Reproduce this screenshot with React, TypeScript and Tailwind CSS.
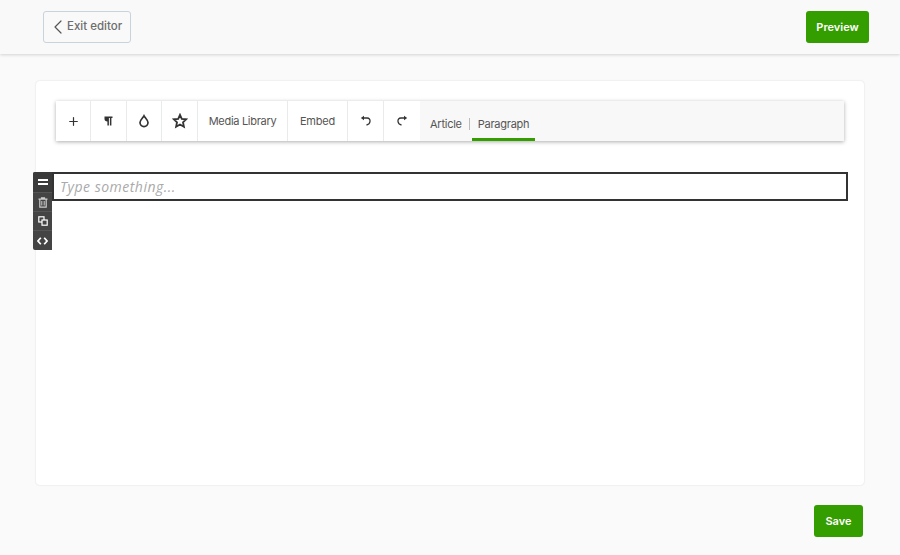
import React from 'react';
import { ChevronLeft, Plus } from 'lucide-react';

const ToolCell: React.FC<{ className: string; children: React.ReactNode }> = ({ className, children }) => (
  <div className={`flex h-full items-center justify-center border-r border-[#e9ebeb] bg-white text-[#555] ${className}`}>
    {children}
  </div>
);

const Pilcrow = () => (
  <svg width="9" height="10" viewBox="0 0 9 10" fill="#333">
    <path d="M0.500 0.500H8.500V2H7.400V9.500H5.900V2H4.900V9.500H3.400V5.500C1.500 5.500 0.500 4.400 0.500 3Z" />
  </svg>
);

const Drop = () => (
  <svg width="14" height="14" viewBox="0 0 14 14" fill="none" stroke="#333" strokeWidth="1.700">
    <path d="M7 1.800C6 3.800 3 5.800 3 8.600a4 4 0 0 0 8 0C11 5.800 8 3.800 7 1.800Z" />
  </svg>
);

const StarIcon = () => (
  <svg width="16" height="16" viewBox="0 0 16 16" fill="none" stroke="#333" strokeWidth="1.800" strokeLinejoin="miter">
    <path d="M8 1.800L9.800 5.800L14.200 6.300L11 9.300L11.900 13.700L8 11.500L4.100 13.700L5 9.300L1.800 6.300L6.200 5.800Z" />
  </svg>
);

const UndoIcon: React.FC<{ flip?: boolean }> = ({ flip }) => (
  <svg width="12" height="12" viewBox="0 0 12 12" fill="none" className={flip ? '-scale-x-100' : ''}>
    <path d="M3 3H7C9.500 3 10.200 5 10 6.500C9.800 8 8.800 9.500 6.500 10" stroke="#333" strokeWidth="1.300" />
    <path d="M4 0.800V5.200L0.800 3Z" fill="#333" />
  </svg>
);

const TrashIcon = () => (
  <svg width="10" height="11" viewBox="0 0 10 11" fill="none" stroke="#ccc" strokeWidth="1.200">
    <path d="M0.500 2.200H9.500M3.500 2V0.800H6.500V2M1.800 2.200V10.200H8.200V2.200" />
    <path d="M3.800 4V8.500M6.200 4V8.500" strokeWidth="1" />
  </svg>
);

const CopyIcon = () => (
  <svg width="10" height="10" viewBox="0 0 10 10" fill="none" stroke="#fff" strokeWidth="1.200">
    <rect x="0.800" y="0.800" width="5.200" height="5.200" />
    <rect x="4" y="4" width="5.200" height="5.200" fill="#444" />
  </svg>
);

const CodeIcon = () => (
  <svg width="11" height="8" viewBox="0 0 11 8" fill="none" stroke="#fff" strokeWidth="1.700">
    <path d="M3.800 0.800L1 4L3.800 7.200M7.200 0.800L10 4L7.200 7.200" />
  </svg>
);

const App: React.FC = () => {
  return (
    <div className="flex h-[555px] w-[900px] flex-col overflow-hidden bg-[#fafafa] font-['Inter',sans-serif]">
      <header className="flex h-[54px] shrink-0 items-center justify-between bg-[#f9f9f9] pl-[43px] pr-[31px] shadow-[0_1px_3px_rgba(0,0,0,0.16)]">
        <button className="flex h-8 w-[88px] items-center rounded-[3px] border border-[#c9d3dc] pl-[2px] text-[11.500px] font-medium text-[#6d6d6d]">
          <ChevronLeft size={24} strokeWidth={1.200} className="-mr-[3px] shrink-0 text-[#555]" />
          Exit editor
        </button>
        <button className="h-8 w-[63px] rounded-[3px] bg-[#349d00] text-[11px] font-semibold text-white">Preview</button>
      </header>

      <main className="mx-[36px] mt-[27px] h-[404px] shrink-0 rounded-[4px] bg-white px-[20px] pt-[20px] shadow-[0_0_2px_rgba(0,0,0,0.14)]">
        <div className="flex h-[40px] items-stretch bg-[#f8f8f8] shadow-[0_1px_4px_rgba(0,0,0,0.32)]">
          <ToolCell className="w-[35px]">
            <Plus size={13} strokeWidth={2.200} color="#333" />
          </ToolCell>
          <ToolCell className="w-[36px]">
            <Pilcrow />
          </ToolCell>
          <ToolCell className="w-[35px]">
            <Drop />
          </ToolCell>
          <ToolCell className="w-[36px]">
            <StarIcon />
          </ToolCell>
          <ToolCell className="w-[90px] pt-[1px] text-[11px] tracking-[-0.3px]">Media Library</ToolCell>
          <ToolCell className="w-[60px] pt-[1px] text-[11px] tracking-[-0.2px]">Embed</ToolCell>
          <ToolCell className="w-[36px]">
            <UndoIcon />
          </ToolCell>
          <ToolCell className="w-[36px] border-r-0">
            <UndoIcon flip />
          </ToolCell>
          <div className="flex items-stretch pl-[10px] text-[11px] tracking-[-0.25px] text-[#555]">
            <span className="mt-[16px] leading-[14px]">Article</span>
            <span className="ml-[7px] mr-[2px] mt-[17px] h-[12px] w-px bg-[#bbb]" />
            <span className="w-[63px] border-b-[3px] border-[#349d00] pl-[6px] pt-[16px] leading-[14px]">Paragraph</span>
          </div>
        </div>

        <div className="relative mt-[31px] -mx-[4px] flex h-[29px] items-center border-2 border-[#333] bg-white pl-[6px]">
          <span className="font-['Open_Sans',sans-serif] text-[14px] italic tracking-[0.500px] text-[#aaa]">Type something...</span>
          <div className="absolute -left-[21px] -top-[2px] flex w-[19px] flex-col overflow-hidden rounded-l-[2px] bg-[#444]">
            <div className="flex h-[20px] items-center justify-center bg-[#3a3a3a]">
              <div className="flex flex-col gap-[2px]">
                <div className="h-[2px] w-[10px] bg-white" />
                <div className="h-[2px] w-[10px] bg-white" />
              </div>
            </div>
            <div className="flex h-[19px] items-center justify-center border-t border-[#555]">
              <TrashIcon />
            </div>
            <div className="flex h-[19px] items-center justify-center border-t border-[#555]">
              <CopyIcon />
            </div>
            <div className="flex h-[20px] items-center justify-center border-t border-[#555]">
              <CodeIcon />
            </div>
          </div>
        </div>
      </main>

      <div className="mr-[37px] mt-[20px] flex justify-end">
        <button className="h-8 w-[49px] rounded-[3px] bg-[#349d00] text-[11px] font-semibold text-white">Save</button>
      </div>
    </div>
  );
};

export default App;
